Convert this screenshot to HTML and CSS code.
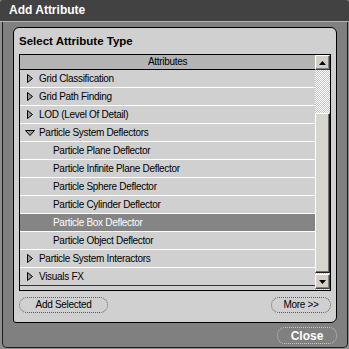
FILE: index.html
```html
<!DOCTYPE html>
<html lang="en">

<head>
    <meta charset="UTF-8">
    <title>Add Attribute</title>
    <link rel="stylesheet" href="styles.css">
</head>

<body>
    <div class="window">
        <div class="titlebar">Add Attribute</div>

        <div class="frame">
            <div class="panel">
                <h2 class="panel-title">Select Attribute Type</h2>

                <div class="listbox">
                    <div class="list">
                        <div class="list-header">Attributes</div>
                        <div class="rows">
                            <div class="row parent">
                                <svg class="arrow" width="6" height="9" viewBox="0 0 6 9"><polygon points="0.5,0.5 5.5,4.5 0.5,8.5" /></svg>
                                Grid Classification
                            </div>
                            <div class="row parent">
                                <svg class="arrow" width="6" height="9" viewBox="0 0 6 9"><polygon points="0.5,0.5 5.5,4.5 0.5,8.5" /></svg>
                                Grid Path Finding
                            </div>
                            <div class="row parent">
                                <svg class="arrow" width="6" height="9" viewBox="0 0 6 9"><polygon points="0.5,0.5 5.5,4.5 0.5,8.5" /></svg>
                                LOD (Level Of Detail)
                            </div>
                            <div class="row parent open">
                                <svg class="arrow" width="10" height="6" viewBox="0 0 10 6"><polygon points="0.5,0.5 9.5,0.5 5,5.5" /></svg>
                                Particle System Deflectors
                            </div>
                            <div class="row child">Particle Plane Deflector</div>
                            <div class="row child">Particle Infinite Plane Deflector</div>
                            <div class="row child">Particle Sphere Deflector</div>
                            <div class="row child">Particle Cylinder Deflector</div>
                            <div class="row child selected">Particle Box Deflector</div>
                            <div class="row child">Particle Object Deflector</div>
                            <div class="row parent">
                                <svg class="arrow" width="6" height="9" viewBox="0 0 6 9"><polygon points="0.5,0.5 5.5,4.5 0.5,8.5" /></svg>
                                Particle System Interactors
                            </div>
                            <div class="row parent">
                                <svg class="arrow" width="6" height="9" viewBox="0 0 6 9"><polygon points="0.5,0.5 5.5,4.5 0.5,8.5" /></svg>
                                Visuals FX
                            </div>
                        </div>
                    </div>

                    <div class="scrollbar">
                        <div class="scroll-btn">
                            <svg width="7" height="4" viewBox="0 0 7 4"><polygon points="3.5,0 7,4 0,4" /></svg>
                        </div>
                        <div class="scroll-track top"></div>
                        <div class="scroll-thumb"></div>
                        <div class="scroll-track gap"></div>
                        <div class="scroll-btn">
                            <svg width="7" height="4" viewBox="0 0 7 4"><polygon points="0,0 7,0 3.5,4" /></svg>
                        </div>
                        <div class="scroll-track gap"></div>
                    </div>
                </div>

                <div class="panel-actions">
                    <button class="pill add-btn">Add Selected</button>
                    <button class="pill more-btn">More &gt;&gt;</button>
                </div>
            </div>

            <div class="window-actions">
                <button class="pill close-btn">Close</button>
            </div>
        </div>
    </div>
</body>

</html>
```

FILE: styles.css
```css
* {
    margin: 0;
    padding: 0;
    box-sizing: border-box;
}

body {
    width: 349px;
    height: 349px;
    overflow: hidden;
    background: #8e8e8e;
    font-family: 'Liberation Sans', Arial, sans-serif;
}

.window {
    width: 349px;
    height: 349px;
    display: flex;
    flex-direction: column;
}

.titlebar {
    height: 22px;
    padding-left: 9px;
    background: #424242;
    border-bottom: 1px solid #b4b4b4;
    border-radius: 3px 3px 0 0;
    color: white;
    font-size: 12px;
    font-weight: bold;
    line-height: 21px;
}

.frame {
    flex: 1;
    margin: 0 1px 1px 2px;
    padding: 5px 10px 3px;
    background: #808080;
    border: 1px solid #1e1e1e;
    border-top: none;
    border-radius: 0 0 5px 5px;
    display: flex;
    flex-direction: column;
}

.panel {
    height: 296px;
    padding: 5px 5px 9px;
    background: #d0d0d0;
    border: 1px solid #000;
    border-radius: 6px 6px 6px 3px;
    display: flex;
    flex-direction: column;
}

.panel-title {
    margin-bottom: 5px;
    font-size: 11.5px;
    font-weight: bold;
    line-height: 16px;
    color: #000;
}

.listbox {
    height: 237px;
    border: 1px solid #000;
    display: flex;
}

.list {
    flex: 1;
    padding-bottom: 4px;
}

.list-header {
    height: 15px;
    background: #b4b4b4;
    border-bottom: 1px solid #000;
    text-align: center;
    font-size: 10px;
    letter-spacing: -0.3px;
    line-height: 14px;
    color: #000;
}

.rows {
    height: 216px;
    overflow: hidden;
    border-bottom: 1px solid #333;
}

.row {
    height: 18px;
    background: #d0d0d0;
    border-bottom: 1px solid #fff;
    display: flex;
    align-items: center;
    font-size: 10px;
    letter-spacing: -0.3px;
    line-height: 17px;
    color: #000;
    white-space: nowrap;
}

.row.parent {
    padding-left: 7px;
    gap: 6px;
}

.row.open {
    padding-left: 5px;
    gap: 4px;
}

.row.child {
    padding-left: 33px;
}

.row.selected {
    background: #858585;
    color: white;
}

.arrow polygon {
    fill: #9a9a9a;
    stroke: #000;
    stroke-width: 1;
}

.scrollbar {
    width: 15px;
    display: flex;
    flex-direction: column;
}

.scroll-btn {
    height: 15px;
    background: #d4d0c8;
    border: 1px solid;
    border-color: #fff #404040 #404040 #fff;
    box-shadow: inset -1px -1px 0 #808080;
    display: flex;
    align-items: center;
    justify-content: center;
}

.scroll-btn polygon {
    fill: #000;
}

.scroll-track {
    background: repeating-conic-gradient(#fff 0 25%, #c4c4c4 0 50%) 0 0 / 2px 2px;
}

.scroll-track.top {
    height: 43px;
}

.scroll-track.gap {
    height: 1px;
}

.scroll-thumb {
    height: 160px;
    background: #d6d6ce;
    border: 1px solid;
    border-color: #fff #202020 #202020 #fff;
    box-shadow: inset -1px -1px 0 #707070;
}

.panel-actions {
    margin-top: 6px;
    display: flex;
    justify-content: space-between;
}

.pill {
    height: 16px;
    background: transparent;
    border: 1px dotted #5a5a5a;
    border-radius: 8px;
    font-family: 'Liberation Sans', Arial, sans-serif;
    font-size: 10px;
    letter-spacing: -0.3px;
    line-height: 14px;
    color: #000;
}

.add-btn {
    width: 89px;
}

.more-btn {
    width: 60px;
}

.window-actions {
    margin-top: 4px;
    display: flex;
    justify-content: flex-end;
}

.close-btn {
    width: 60px;
    height: 17px;
    border-color: #c8c8c8;
    color: white;
    font-size: 12px;
    font-weight: bold;
    letter-spacing: 0;
}
```
